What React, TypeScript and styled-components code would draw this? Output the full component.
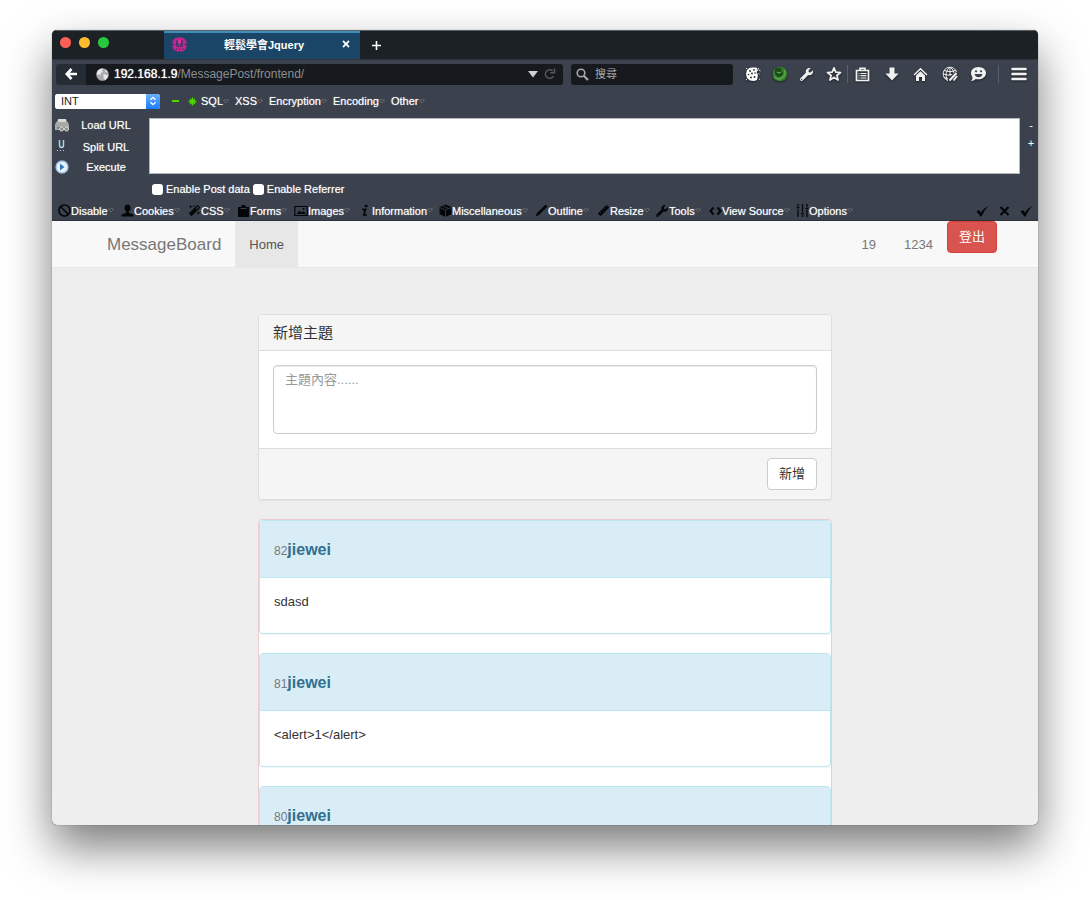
import React from "react";
import styled, { createGlobalStyle } from "styled-components";
import { FaBan, FaMagic, FaWrench, FaTimes } from "react-icons/fa";

const sans = `"Liberation Sans", Helvetica, Arial, "Noto Sans CJK TC", sans-serif`;

const GlobalStyle = createGlobalStyle`
  * { box-sizing: border-box; }
  body { margin: 0; background: #fff; font-family: ${sans}; font-size: 13px; color: #333; }
  button, input, select, textarea { font-family: inherit; }
  button { padding: 0; border: 0; background: none; color: inherit; cursor: pointer; }
  a { color: inherit; text-decoration: none; }
  svg { display: block; flex: none; }
`;

const Desktop = styled.div`
  display: flex;
  height: 100vh;
  padding: 30px 52px 75px;
  overflow: hidden;
`;

const BrowserWindow = styled.div`
  flex: 1;
  min-width: 0;
  display: flex;
  flex-direction: column;
  overflow: hidden;
  border-radius: 5px;
  background: #3b424d;
  box-shadow: 0 0 1px rgba(0, 0, 0, 0.6), 0 22px 46px rgba(0, 0, 0, 0.52);
`;

const TitleBar = styled.header`
  display: flex;
  height: 29px;
  background: #1c2126;
  border-top: 1px solid #5c6266;
  color: #fff;
`;

const Lights = styled.div`
  display: flex;
  gap: 8px;
  width: 112px;
  padding: 6px 0 0 8px;
`;

const Light = styled.button<{ $color: string }>`
  width: 11px;
  height: 11px;
  border-radius: 50%;
  background: ${(p) => p.$color};
`;

const Tab = styled.div`
  display: flex;
  align-items: center;
  justify-content: space-between;
  width: 196px;
  padding: 0 9px 4px 8px;
  background: #1a4566;
  border-top: 2px solid #3f8dbb;
  font-size: 11px;
  font-weight: bold;
`;

const NewTab = styled.button`
  display: grid;
  place-items: center;
  width: 32px;
`;

const AddressRow = styled.div`
  display: flex;
  align-items: center;
  height: 29px;
  padding: 0 5px 0 4px;
  color: #f1f1f1;
  border-top: 1px solid #2d343c;
`;

const BackButton = styled.button`
  display: grid;
  place-items: center;
  width: 30px;
  height: 21px;
  border-radius: 3px 0 0 3px;
  background: #262c34;
`;

const AddressField = styled.div`
  flex: 1;
  display: flex;
  align-items: center;
  height: 21px;
  padding: 0 7px 0 10px;
  border-radius: 0 3px 3px 0;
  background: #16191d;
  color: #8c8f92;
`;

const Address = styled.span`
  flex: 1;
  padding-left: 5px;
  font-size: 12px;
  b { font-weight: normal; color: #fff; text-shadow: 0 0 1px #fff; }
`;

const SearchField = styled.label`
  display: flex;
  align-items: center;
  gap: 6px;
  width: 162px;
  height: 21px;
  margin: 0 6px 0 8px;
  padding: 0 5px;
  border-radius: 3px;
  background: #16191d;
  color: #a7a9ab;
`;

const SearchInput = styled.input`
  flex: 1;
  min-width: 0;
  padding: 0;
  border: 0;
  background: none;
  color: #fff;
  font-size: 11px;
  &::placeholder { color: #a7a9ab; opacity: 1; }
`;

const IconButton = styled.button<{ $wide?: boolean }>`
  display: grid;
  place-items: center;
  width: ${(p) => (p.$wide ? 29 : 27)}px;
  height: 21px;
  filter: drop-shadow(0 1px 1px rgba(0, 0, 0, 0.5));
`;

const Separator = styled.span<{ $space?: boolean }>`
  width: 1px;
  height: 18px;
  margin: 0 ${(p) => (p.$space ? 5 : 0)}px;
  background: #596069;
`;

const HackBar = styled.section`
  color: #fff;
  font-size: 11px;
  text-shadow: 0 0 1px rgba(255, 255, 255, 0.6);
`;

const HackMenu = styled.div`
  display: flex;
  align-items: center;
  height: 26px;
  padding: 0 3px;
`;

const SelectBox = styled.label`
  display: flex;
  width: 105px;
  height: 15px;
  margin-right: 7px;
  border-radius: 3px;
  overflow: hidden;
  background: #fff;
`;

const Select = styled.select`
  flex: 1;
  appearance: none;
  border: 0;
  padding: 0 6px;
  background: #fff;
  color: #222;
  font-size: 11px;
`;

const SelectArrows = styled.span`
  display: grid;
  place-items: center;
  width: 14px;
  background: linear-gradient(#6bb1fa, #1a7bfb);
`;

const GreenButton = styled.button`
  display: grid;
  place-items: center;
  width: 17px;
  height: 16px;
  color: #4fd800;
`;

const MenuButton = styled.button<{ $width: number }>`
  display: flex;
  align-items: center;
  width: ${(p) => p.$width}px;
  height: 16px;
  font-size: 11px;
  white-space: nowrap;
  text-shadow: inherit;
`;

const MenuIcon = styled.span`
  display: grid;
  place-items: center;
  width: 14px;
  color: #050608;
`;

const HackGrid = styled.div`
  display: grid;
  grid-template-columns: 97px 1fr 18px;
  padding-top: 4px;
`;

const HackActions = styled.div`
  display: flex;
  flex-direction: column;
  gap: 6px;
`;

const HackAction = styled.button`
  display: grid;
  grid-template-columns: 16px 1fr;
  align-items: center;
  gap: 8px;
  height: 15px;
  padding: 0 16px 1px 3px;
  font-size: 11px;
  text-shadow: inherit;
  white-space: nowrap;
`;

const HackInput = styled.textarea`
  display: block;
  width: 100%;
  height: 56px;
  border: 1px solid #b3b6ba;
  padding: 4px;
  background: #fff;
  resize: none;
`;

const HackResize = styled.div`
  display: flex;
  flex-direction: column;
  align-items: center;
  padding-left: 4px;
  button { height: 18px; padding-bottom: 4px; font-size: 11px; line-height: 12px; }
`;

const CheckRow = styled.div`
  display: flex;
  align-items: center;
  gap: 3px;
  height: 28px;
  padding: 0 0 0 100px;
`;

const CheckLabel = styled.label`
  display: flex;
  align-items: center;
  gap: 3px;
`;

const Check = styled.input`
  appearance: none;
  width: 11px;
  height: 11px;
  margin: 0;
  border-radius: 3px;
  background: #fff;
  &:checked { background: #1a7bfb; }
`;

const DevBar = styled.nav`
  display: flex;
  align-items: center;
  height: 18px;
  padding: 0 5px 2px;
  border-bottom: 1px solid #2c323b;
  color: #fff;
  text-shadow: 0 0 1px rgba(255, 255, 255, 0.6);
`;

const DevStatus = styled.div`
  display: flex;
  align-items: center;
  gap: 9px;
  margin-left: auto;
  color: #050608;
`;

const Page = styled.div`
  flex: 1;
  min-height: 0;
  overflow-y: auto;
  scrollbar-width: none;
  background: #eee;
`;

const Navbar = styled.nav`
  display: flex;
  height: 47px;
  padding: 0 41px 0 40px;
  background: #f8f8f8;
  border-bottom: 1px solid #e7e7e7;
  color: #777;
`;

const Brand = styled.a`
  padding: 0 14px 0 15px;
  font-size: 17px;
  line-height: 47px;
`;

const NavLink = styled.a<{ $active?: boolean }>`
  padding: 0 14px;
  line-height: 47px;
  color: ${(p) => (p.$active ? "#555" : "#777")};
  background: ${(p) => (p.$active ? "#e7e7e7" : "transparent")};
`;

const NavRight = styled.div`
  display: flex;
  margin-left: auto;
`;

const Button = styled.button<{ $danger?: boolean }>`
  width: 50px;
  height: 32px;
  padding-bottom: 3px;
  border: 1px solid ${(p) => (p.$danger ? "#d43f3a" : "#ccc")};
  border-radius: 4px;
  background: ${(p) => (p.$danger ? "#d9534f" : "#fff")};
  color: ${(p) => (p.$danger ? "#fff" : "#333")};
  font-size: 13px;
`;

const Content = styled.main`
  display: flex;
  flex-direction: column;
  gap: 19px;
  max-width: 574px;
  margin: 46px auto 0;
`;

const Panel = styled.form`
  border: 1px solid #ddd;
  border-radius: 4px;
  background: #fff;
  overflow: hidden;
  box-shadow: 0 1px 1px rgba(0, 0, 0, 0.05);
`;

const PanelHeading = styled.h1`
  margin: 0;
  padding: 0 14px;
  border-bottom: 1px solid #ddd;
  background: #f5f5f5;
  font-size: 15px;
  font-weight: normal;
  line-height: 35px;
`;

const PanelBody = styled.div`
  padding: 14px;
`;

const TopicInput = styled.textarea`
  display: block;
  width: 100%;
  height: 69px;
  padding: 5px 11px;
  border: 1px solid #ccc;
  border-radius: 4px;
  box-shadow: inset 0 1px 1px rgba(0, 0, 0, 0.08);
  font-size: 13px;
  line-height: 18px;
  resize: none;
  &::placeholder { color: #999; opacity: 1; }
`;

const PanelFooter = styled.div`
  display: flex;
  justify-content: flex-end;
  padding: 9px 14px;
  border-top: 1px solid #ddd;
  background: #f5f5f5;
`;

const Messages = styled.section`
  display: flex;
  flex-direction: column;
  gap: 19px;
  border: 1px solid #ebccd1;
  border-radius: 4px;
  background: #fff;
`;

const Message = styled.article`
  border: 1px solid #bce8f1;
  border-radius: 4px;
  overflow: hidden;
  box-shadow: 0 1px 1px rgba(0, 0, 0, 0.05);
`;

const MessageHeading = styled.h2`
  margin: 0;
  height: 57px;
  padding: 0 14px;
  border-bottom: 1px solid #bce8f1;
  background: #d9edf7;
  color: #31708f;
  font-size: 16px;
  line-height: 58px;
  small { color: #777; font-size: 12px; font-weight: normal; }
`;

const MessageBody = styled.p`
  margin: 0;
  height: 55px;
  padding: 15px 14px;
  line-height: 18px;
`;

const Caret = () => (
  <svg width="6" height="5" viewBox="0 0 6 5"><path d="M0.500 1h5L3 4z" fill="#2a2f36" stroke="#7b828b" strokeWidth="0.700" /></svg>
);

const Favicon = () => (
  <svg width="15" height="15" viewBox="0 0 15 15">
    <rect x=".5" y=".5" width="14" height="14" rx="5.500" fill="#c9218f" />
    <rect x="4" y="3" width="7" height="7" rx="1.500" fill="#4d3a68" />
    <path d="M6 3h3v3.500H6zM6.500 7.500h2v1h-2z" fill="#d7359f" />
    <path d="M0 7.500h2.500M12.500 7.500H15M3.500 12.500l1.500-1M11.500 12.500l-1.500-1M7.500 11.500V13" stroke="#1a4566" />
  </svg>
);

const Globe = () => (
  <svg width="13" height="13" viewBox="0 0 13 13">
    <circle cx="6.500" cy="6.500" r="6.300" fill="#aaa" />
    <path d="M2 2.500Q4 .5 7 .6L6 2.500 7 4 5 5 4.500 7 2.500 6.500 1 7Q.4 4 2 2.500zM7.500 6l3 1 1.500-.5Q12 10 9 12L7.500 10zM9 1.500l2.500 2.500-2 .5z" fill="#e8e8e8" />
  </svg>
);

const SearchIcon = () => (
  <svg width="13" height="13" viewBox="0 0 13 13" fill="none" stroke="currentColor"><circle cx="5" cy="5" r="3.800" strokeWidth="1.600" /><path d="M8 8l4 4" strokeWidth="2.200" /></svg>
);

const CookieIcon = () => (
  <svg width="16" height="16" viewBox="0 0 16 16">
    <path d="M7 1.500h3l4 .8-1 2.200-1.500 1.500L13 9l-1 5-3 1-4-.5-3-2.500L1 8l1-4 2.500-2z" fill="#fff" />
    <path d="M14 4l1.500 1M13.500 7.500l1 .5M2 13l-1 1M14 13l1 .5M2 2L1 3" stroke="#ddd" />
    <g fill="#25292e"><circle cx="5" cy="5" r=".9" /><circle cx="9" cy="3.800" r=".9" /><circle cx="3.500" cy="8.500" r=".8" /><circle cx="7" cy="7.500" r=".9" /><circle cx="10" cy="7" r=".8" /><circle cx="6" cy="11.500" r=".9" /><circle cx="9.500" cy="11" r=".9" /><circle cx="12.500" cy="3" r=".7" /></g>
  </svg>
);

const OrbIcon = () => (
  <svg width="16" height="16" viewBox="0 0 16 16">
    <circle cx="8" cy="8" r="7.300" fill="#35812c" />
    <path d="M3 3q4-2.500 7 0l-1 2 2 1-1 4-4 1-3-3z" fill="#1a4a19" />
    <path d="M2 11q5 4 9 0 3-3 1.500-7M5 6l2 1 2-1" fill="none" stroke="#64ad4e" strokeWidth="1.200" />
  </svg>
);

const StarIcon = () => (
  <svg width="16" height="16" viewBox="0 0 16 16"><path d="M8 1.800l1.800 4.300 4.700.4-3.600 3 1.200 4.500L8 11.500 3.900 14l1.200-4.500-3.600-3 4.700-.4z" fill="none" stroke="currentColor" strokeWidth="1.700" strokeLinejoin="round" /></svg>
);

const ListIcon = () => (
  <svg width="15" height="15" viewBox="0 0 15 15" fill="none" stroke="#f1f1f1" strokeWidth="1.700">
    <path d="M1.500 3.500h12v10h-12z" /><path d="M5 3V1.300h5V3" />
    <path d="M3.500 6.500h1M5.500 6.500h6M3.500 8.700h1M5.500 8.700h6M3.500 11h1M5.500 11h6" strokeWidth="1.200" />
  </svg>
);

const DownIcon = () => (
  <svg width="14" height="14" viewBox="0 0 14 14"><path d="M4.500 .5h5v6h4L7 13.500.5 6.500h4z" fill="currentColor" /></svg>
);

const HomeIcon = () => (
  <svg width="15" height="15" viewBox="0 0 15 15">
    <path d="M1 8l6.500-6.300L14 8" fill="none" stroke="currentColor" strokeWidth="1.500" />
    <path d="M3 8.500L7.500 4.200 12 8.500V14H9v-4H6v4H3z" fill="currentColor" />
  </svg>
);

const GlobePenIcon = () => (
  <svg width="16" height="16" viewBox="0 0 16 16" fill="none" stroke="currentColor">
    <path d="M6 14.500A6.800 6.800 0 1 1 14.500 6M2 4.500q6 2.500 12 0M1.200 8q5 2 9 .5M2 11.500q2 1 4 .8M8 1Q2 6 5 14M8 1q4 3 4 6M8 1v9" />
    <path d="M14.500 7l-7 7.500M15 10l-3.500 4.500" strokeWidth="2" />
  </svg>
);

const SmileIcon = () => (
  <svg width="17" height="16" viewBox="0 0 17 16">
    <path d="M8.500 1c4.500 0 7.500 2.800 7.500 6s-3 6.300-7.500 6.300q-1.500 0-2.700-.4Q4 14.800 1 15q1.500-1.500 1.500-3.500Q1 9.500 1 7c0-3.200 3-6 7.500-6z" fill="currentColor" />
    <circle cx="6" cy="5.300" r="1.100" fill="#3b424d" /><circle cx="11" cy="5.300" r="1.100" fill="#3b424d" />
    <path d="M4.500 8h8q-1 3.300-4 3.300T4.500 8z" fill="#3b424d" />
  </svg>
);

const BurgerIcon = () => (
  <svg width="16" height="14" viewBox="0 0 16 14"><path d="M1.500 2h13M1.500 7h13M1.500 12h13" stroke="currentColor" strokeWidth="2.500" strokeLinecap="round" /></svg>
);

const LoadIcon = () => (
  <svg width="15" height="14" viewBox="0 0 15 14">
    <path d="M3 1h8l1 4H2z" fill="#d9d9d7" /><path d="M1 4h12l1 3v5H0V7z" fill="#a9aaa8" /><path d="M2 10h10" stroke="#4b4d4e" />
    <circle cx="6.500" cy="11" r="2" fill="#888" stroke="#ddd" /><circle cx="11.500" cy="11" r="2" fill="#888" stroke="#ddd" />
  </svg>
);

const SplitIcon = () => (
  <svg width="14" height="15" viewBox="0 0 14 15" fill="none">
    <path d="M4.500 1v5q0 2.500 2 2.500t2-2.500V1" stroke="#a8d5e8" strokeWidth="1.500" /><path d="M6.500 1v5" stroke="#2c5261" /><path d="M2 11.500h9" stroke="#c8cdd0" strokeDasharray="1 2" />
  </svg>
);

const PlayIcon = () => (
  <svg width="14" height="14" viewBox="0 0 14 14">
    <circle cx="7" cy="7" r="6" fill="#e9f3fb" stroke="#9cc0e4" strokeWidth="1.300" /><path d="M5 3.500L9.500 7 5 10.500z" fill="#3277bd" />
  </svg>
);

const UserIcon = () => (
  <svg width="13" height="13" viewBox="0 0 13 13"><path d="M6.500.5c2 0 3 1.300 3 3.200 0 1.800-.8 3-1.700 3.800v1.200l4 1.600q1 .5 1 2.200H.2q0-1.700 1-2.200l4-1.600V7.500C4.300 6.700 3.500 5.500 3.500 3.700 3.500 1.800 4.500.5 6.500.5z" fill="currentColor" /></svg>
);
const FormIcon = () => (
  <svg width="13" height="13" viewBox="0 0 13 13"><path d="M1 3h3l1-2h3l1 2h3v10H1z" fill="currentColor" /><path d="M3.500 4.500h6" stroke="#3b424d" /></svg>
);
const ImageIcon = () => (
  <svg width="14" height="12" viewBox="0 0 14 12"><path d="M.8 1.500h12.400v9H.8z" fill="none" stroke="currentColor" strokeWidth="1.200" /><path d="M2.500 9l3-3.500L7.500 7.500l2-1.500 2.500 3z" fill="currentColor" /><circle cx="9.500" cy="4" r="1" fill="currentColor" /></svg>
);
const InfoIcon = () => (
  <svg width="12" height="13" viewBox="0 0 12 13" fill="none" stroke="currentColor" strokeLinecap="round"><circle cx="7" cy="2" r="1" fill="currentColor" /><path d="M4 5.500h2.500L5 10.500q-.3 1.500 2 .5" strokeWidth="1.800" /></svg>
);
const CubeIcon = () => (
  <svg width="13" height="13" viewBox="0 0 13 13"><path d="M6.500.5l6 2.500v7l-6 3-6-3V3z" fill="currentColor" /><path d="M.5 3.500l6 2.500 6-2.500M6.500 6v7M3.500 2l6 2.500" fill="none" stroke="#3b424d" strokeWidth=".8" /></svg>
);
const PencilIcon = () => (
  <svg width="13" height="13" viewBox="0 0 13 13"><path d="M.5 12.500l1.500-3.500L9.500 1.500q1-1 2-.3t.3 2L4 11z" fill="currentColor" /></svg>
);
const RulerIcon = () => (
  <svg width="13" height="13" viewBox="0 0 13 13"><path d="M.8 9.500L9.500.8l2.700 2.700-8.700 8.700z" fill="currentColor" /><path d="M3 8l1 1M5 6l1 1M7 4l1 1M9 2l1 1" stroke="#3b424d" strokeWidth=".7" /></svg>
);
const CodeIcon = () => (
  <svg width="13" height="10" viewBox="0 0 13 10"><path d="M4.500 1.500L1.500 5l3 3.500M8.500 1.500l3 3.500-3 3.500" fill="none" stroke="currentColor" strokeWidth="2" /></svg>
);
const SlidersIcon = () => (
  <svg width="13" height="13" viewBox="0 0 13 13" stroke="currentColor"><path d="M2 0v2M2 5v8M6.500 0v8M6.500 11v2M11 0v3M11 6v7" strokeWidth="1.300" /><path d="M.5 3.500h3M5 9.500h3M9.500 4.500h3" strokeWidth="1.600" /></svg>
);
const CheckIcon = () => (
  <svg width="13" height="12" viewBox="0 0 13 12"><path d="M.5 6.500L3 5l2 2.500Q8 3 12.500 .5 8.500 5 5.500 11.500H4.500z" fill="currentColor" /></svg>
);
const CrossIcon = () => (
  <svg width="13" height="12" viewBox="0 0 13 12"><path d="M2.500 2l8 8M10.500 2l-8 8" stroke="currentColor" strokeWidth="2.200" /></svg>
);

const hackMenus: [string, number][] = [["SQL", 34], ["XSS", 34], ["Encryption", 64], ["Encoding", 58], ["Other", 40]];

const devMenus: [string, number, React.ReactNode][] = [
  ["Disable", 63, <FaBan size={13} />],
  ["Cookies", 67, <UserIcon />],
  ["CSS", 49, <FaMagic size={11} />],
  ["Forms", 58, <FormIcon />],
  ["Images", 64, <ImageIcon />],
  ["Information", 80, <InfoIcon />],
  ["Miscellaneous", 96, <CubeIcon />],
  ["Outline", 62, <PencilIcon />],
  ["Resize", 59, <RulerIcon />],
  ["Tools", 53, <FaWrench size={12} />],
  ["View Source", 87, <CodeIcon />],
  ["Options", 60, <SlidersIcon />],
];

const messages = [
  { id: 82, name: "jiewei", text: "sdasd" },
  { id: 81, name: "jiewei", text: "<alert>1</alert>" },
  { id: 80, name: "jiewei", text: "" },
];

export default function App() {
  return (
    <Desktop>
      <GlobalStyle />
      <BrowserWindow>
        <TitleBar>
          <Lights>
            <Light $color="#ff5f57" aria-label="Close window" />
            <Light $color="#fdbc2e" aria-label="Minimize window" />
            <Light $color="#28c940" aria-label="Zoom window" />
          </Lights>
          <Tab>
            <Favicon />
            <span>輕鬆學會Jquery</span>
            <button aria-label="Close tab"><FaTimes size={10} /></button>
          </Tab>
          <NewTab aria-label="New tab">
            <svg width="11" height="11" viewBox="0 0 11 11"><path d="M5.500 1v9M1 5.500h9" stroke="#fff" strokeWidth="1.600" /></svg>
          </NewTab>
        </TitleBar>

        <AddressRow>
          <BackButton aria-label="Back">
            <svg width="12" height="12" viewBox="0 0 12 12"><path d="M6.500 1L1.800 6l4.700 5M2 6h10" fill="none" stroke="#fff" strokeWidth="2.600" /></svg>
          </BackButton>
          <AddressField>
            <Globe />
            <Address><b>192.168.1.9</b>/MessagePost/frontend/</Address>
            <svg width="28" height="12" viewBox="0 0 28 12">
              <path d="M0 3h10L5 9.500z" fill="#d0d0d0" />
              <path d="M25.500 8a4.300 4.300 0 1 1-.8-5M26.500.5v4.300h-4.300" fill="none" stroke="#55585b" strokeWidth="1.500" />
            </svg>
          </AddressField>
          <SearchField>
            <SearchIcon />
            <SearchInput placeholder="搜尋" aria-label="搜尋" />
          </SearchField>
          <IconButton aria-label="Cookies"><CookieIcon /></IconButton>
          <IconButton aria-label="Proxy"><OrbIcon /></IconButton>
          <IconButton aria-label="Developer"><FaWrench size={13} /></IconButton>
          <IconButton aria-label="Bookmark"><StarIcon /></IconButton>
          <Separator />
          <IconButton $wide aria-label="Bookmarks list"><ListIcon /></IconButton>
          <IconButton $wide aria-label="Downloads"><DownIcon /></IconButton>
          <IconButton $wide aria-label="Home page"><HomeIcon /></IconButton>
          <IconButton $wide aria-label="Edit page"><GlobePenIcon /></IconButton>
          <IconButton $wide aria-label="Chat"><SmileIcon /></IconButton>
          <Separator $space />
          <IconButton $wide aria-label="Menu"><BurgerIcon /></IconButton>
        </AddressRow>

        <HackBar>
          <HackMenu>
            <SelectBox>
              <Select aria-label="Type" defaultValue="INT"><option>INT</option></Select>
              <SelectArrows>
                <svg width="8" height="10" viewBox="0 0 8 10"><path d="M1.500 3.800L4 1.300l2.500 2.500M1.500 6.200L4 8.700l2.500-2.500" fill="none" stroke="#fff" strokeWidth="1.300" /></svg>
              </SelectArrows>
            </SelectBox>
            <GreenButton aria-label="Decrease"><svg width="8" height="8" viewBox="0 0 8 8"><path d="M0 4h7" stroke="currentColor" strokeWidth="2" /></svg></GreenButton>
            <GreenButton aria-label="Increase"><svg width="9" height="9" viewBox="0 0 9 9"><path d="M4.500 .5v8M.5 4.500h8M2 2l5 5M7 2L2 7" stroke="currentColor" strokeWidth="1.300" /></svg></GreenButton>
            {hackMenus.map(([label, width]) => (
              <MenuButton key={label} $width={width}>{label}<Caret /></MenuButton>
            ))}
          </HackMenu>
          <HackGrid>
            <HackActions>
              <HackAction><LoadIcon /><span>Load URL</span></HackAction>
              <HackAction><SplitIcon /><span>Split URL</span></HackAction>
              <HackAction><PlayIcon /><span>Execute</span></HackAction>
            </HackActions>
            <HackInput aria-label="URL" />
            <HackResize><button>-</button><button>+</button></HackResize>
          </HackGrid>
          <CheckRow>
            <CheckLabel><Check type="checkbox" />Enable Post data</CheckLabel>
            <CheckLabel><Check type="checkbox" />Enable Referrer</CheckLabel>
          </CheckRow>
        </HackBar>

        <DevBar>
          {devMenus.map(([label, width, icon]) => (
            <MenuButton key={label} $width={width}><MenuIcon>{icon}</MenuIcon>{label}<Caret /></MenuButton>
          ))}
          <DevStatus><CheckIcon /><CrossIcon /><CheckIcon /></DevStatus>
        </DevBar>

        <Page>
          <Navbar>
            <Brand href="#">MessageBoard</Brand>
            <NavLink href="#" $active>Home</NavLink>
            <NavRight>
              <NavLink href="#">19</NavLink>
              <NavLink href="#">1234</NavLink>
              <Button $danger>登出</Button>
            </NavRight>
          </Navbar>
          <Content>
            <Panel onSubmit={(e) => e.preventDefault()}>
              <PanelHeading>新增主題</PanelHeading>
              <PanelBody>
                <TopicInput placeholder="主題內容......" aria-label="主題內容" />
              </PanelBody>
              <PanelFooter><Button>新增</Button></PanelFooter>
            </Panel>
            <Messages>
              {messages.map((m) => (
                <Message key={m.id}>
                  <MessageHeading><small>{m.id}</small>{m.name}</MessageHeading>
                  <MessageBody>{m.text}</MessageBody>
                </Message>
              ))}
            </Messages>
          </Content>
        </Page>
      </BrowserWindow>
    </Desktop>
  );
}
